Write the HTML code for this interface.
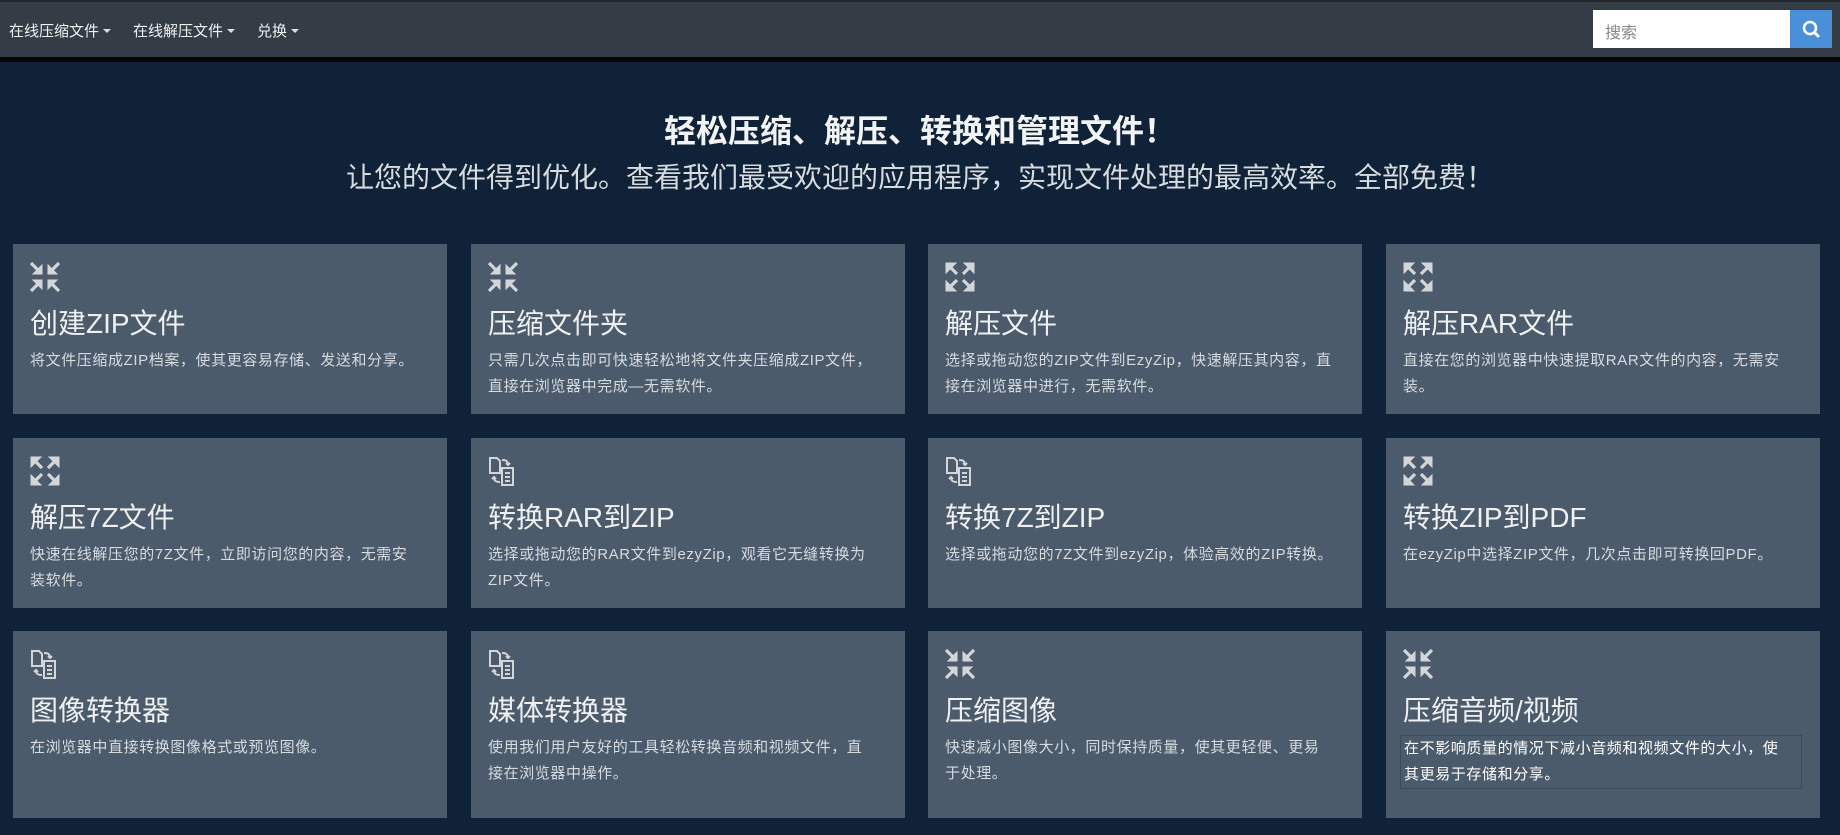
<!DOCTYPE html>
<html><head><meta charset="utf-8"><style>
*{box-sizing:border-box;margin:0;padding:0}
body{width:1840px;height:835px;overflow:hidden;background:#0f2237;font-family:"Liberation Sans","Noto Sans CJK SC",sans-serif;color:#e6e9ec}
.nav{position:absolute;left:0;top:0;width:1840px;height:62px;background:#343c46;border-top:2px solid #23282e;border-bottom:5px solid #050607}
.nav .m{position:absolute;top:18px;font-size:15px;color:#eef0f2}
.nav .m:after{content:"";display:inline-block;margin-left:4px;vertical-align:3px;border-left:4px solid transparent;border-right:4px solid transparent;border-top:4px solid #ddd}
.search{position:absolute;left:1593px;top:8px;width:197px;height:38px;background:#fff;color:#888;font-size:16px;padding:9px 12px}
.sbtn{position:absolute;left:1790px;top:8px;width:42px;height:38px;background:#4a90d9}
h1{position:absolute;top:106px;left:0;width:1840px;text-align:center;font-size:32px;font-weight:bold;color:#f2f4f6}
h2{position:absolute;top:156px;left:0;width:1840px;text-align:center;font-size:28px;font-weight:normal;color:#d6dbe0}
.c{position:absolute;width:434px;background:#4c5b6b;padding:18px 28px 0 17px}
.c svg{display:block;width:30px;height:30px}
.c .t{font-size:28px;margin-top:12px;line-height:40px;color:#eef0f2}
.c .d{font-size:15px;letter-spacing:0.6px;line-height:26px;color:#d6dbe0;margin-top:4px}
.hl{display:block;width:402px;border:1px solid #3e4a57;color:#fff !important;margin-left:-3px;padding-left:3px}
</style></head><body>
<div class="nav">
<span class="m" style="left:9px">在线压缩文件</span>
<span class="m" style="left:133px">在线解压文件</span>
<span class="m" style="left:257px">兑换</span>
<div class="search">搜索</div>
<div class="sbtn"><svg width="42" height="38" viewBox="0 0 42 38"><circle cx="20" cy="18" r="6" fill="none" stroke="#fff" stroke-width="2.6"/><line x1="24.5" y1="22.5" x2="28" y2="26" stroke="#fff" stroke-width="3" stroke-linecap="round"/></svg></div>
</div>
<h1>轻松压缩、解压、转换和管理文件！</h1>
<h2>让您的文件得到优化。查看我们最受欢迎的应用程序，实现文件处理的最高效率。全部免费！</h2>

<svg width="0" height="0" style="position:absolute"><defs>
<g id="cmp" fill="#d3d6d9" stroke="#d3d6d9" stroke-width="3.2"><path d="M1 1l10 10M1 29l10-10M29 1L19 11M29 29L19 19" fill="none"/><path d="M12 3v9H3z M18 3v9h9z M12 27v-9H3z M18 27v-9h9z" stroke-width="1"/></g>
<g id="exp" fill="#d3d6d9" stroke="#d3d6d9" stroke-width="3.2"><path d="M4 4l8 8M4 26l8-8M26 4l-8 8M26 26l-8-8" fill="none"/><path d="M1 1h10L1 11z M29 1H19l10 10z M1 29h10L1 19z M29 29H19l10-10z" stroke-width="1"/></g>
<g id="cnv" fill="none" stroke="#d3d6d9" stroke-width="2"><path d="M2 2h7l3 3v12H2z"/><path d="M14 12h11v17H14z"/><path d="M17 17h5M17 21h5M17 25h5"/><path d="M14 4c4 0 6 1 6 5M18 7l2 2 2-2"/><path d="M12 26c-4 0-6-1-6-5M4 23l2-2 2 2"/></g>
</defs></svg>

<div class="c" style="left:13px;top:244px;height:170px"><svg viewBox="0 0 30 30"><use href="#cmp"/></svg><div class="t">创建ZIP文件</div><div class="d">将文件压缩成ZIP档案，使其更容易存储、发送和分享。</div></div>
<div class="c" style="left:471px;top:244px;height:170px"><svg viewBox="0 0 30 30"><use href="#cmp"/></svg><div class="t">压缩文件夹</div><div class="d">只需几次点击即可快速轻松地将文件夹压缩成ZIP文件，<br>直接在浏览器中完成—无需软件。</div></div>
<div class="c" style="left:928px;top:244px;height:170px"><svg viewBox="0 0 30 30"><use href="#exp"/></svg><div class="t">解压文件</div><div class="d">选择或拖动您的ZIP文件到EzyZip，快速解压其内容，直<br>接在浏览器中进行，无需软件。</div></div>
<div class="c" style="left:1386px;top:244px;height:170px"><svg viewBox="0 0 30 30"><use href="#exp"/></svg><div class="t">解压RAR文件</div><div class="d">直接在您的浏览器中快速提取RAR文件的内容，无需安<br>装。</div></div>

<div class="c" style="left:13px;top:438px;height:170px"><svg viewBox="0 0 30 30"><use href="#exp"/></svg><div class="t">解压7Z文件</div><div class="d">快速在线解压您的7Z文件，立即访问您的内容，无需安<br>装软件。</div></div>
<div class="c" style="left:471px;top:438px;height:170px"><svg viewBox="0 0 30 30"><use href="#cnv"/></svg><div class="t">转换RAR到ZIP</div><div class="d">选择或拖动您的RAR文件到ezyZip，观看它无缝转换为<br>ZIP文件。</div></div>
<div class="c" style="left:928px;top:438px;height:170px"><svg viewBox="0 0 30 30"><use href="#cnv"/></svg><div class="t">转换7Z到ZIP</div><div class="d">选择或拖动您的7Z文件到ezyZip，体验高效的ZIP转换。</div></div>
<div class="c" style="left:1386px;top:438px;height:170px"><svg viewBox="0 0 30 30"><use href="#exp"/></svg><div class="t">转换ZIP到PDF</div><div class="d">在ezyZip中选择ZIP文件，几次点击即可转换回PDF。</div></div>

<div class="c" style="left:13px;top:631px;height:187px"><svg viewBox="0 0 30 30"><use href="#cnv"/></svg><div class="t">图像转换器</div><div class="d">在浏览器中直接转换图像格式或预览图像。</div></div>
<div class="c" style="left:471px;top:631px;height:187px"><svg viewBox="0 0 30 30"><use href="#cnv"/></svg><div class="t">媒体转换器</div><div class="d">使用我们用户友好的工具轻松转换音频和视频文件，直<br>接在浏览器中操作。</div></div>
<div class="c" style="left:928px;top:631px;height:187px"><svg viewBox="0 0 30 30"><use href="#cmp"/></svg><div class="t">压缩图像</div><div class="d">快速减小图像大小，同时保持质量，使其更轻便、更易<br>于处理。</div></div>
<div class="c" style="left:1386px;top:631px;height:187px"><svg viewBox="0 0 30 30"><use href="#cmp"/></svg><div class="t">压缩音频/视频</div><div class="d hl">在不影响质量的情况下减小音频和视频文件的大小，使<br>其更易于存储和分享。</div></div>
</body></html>
